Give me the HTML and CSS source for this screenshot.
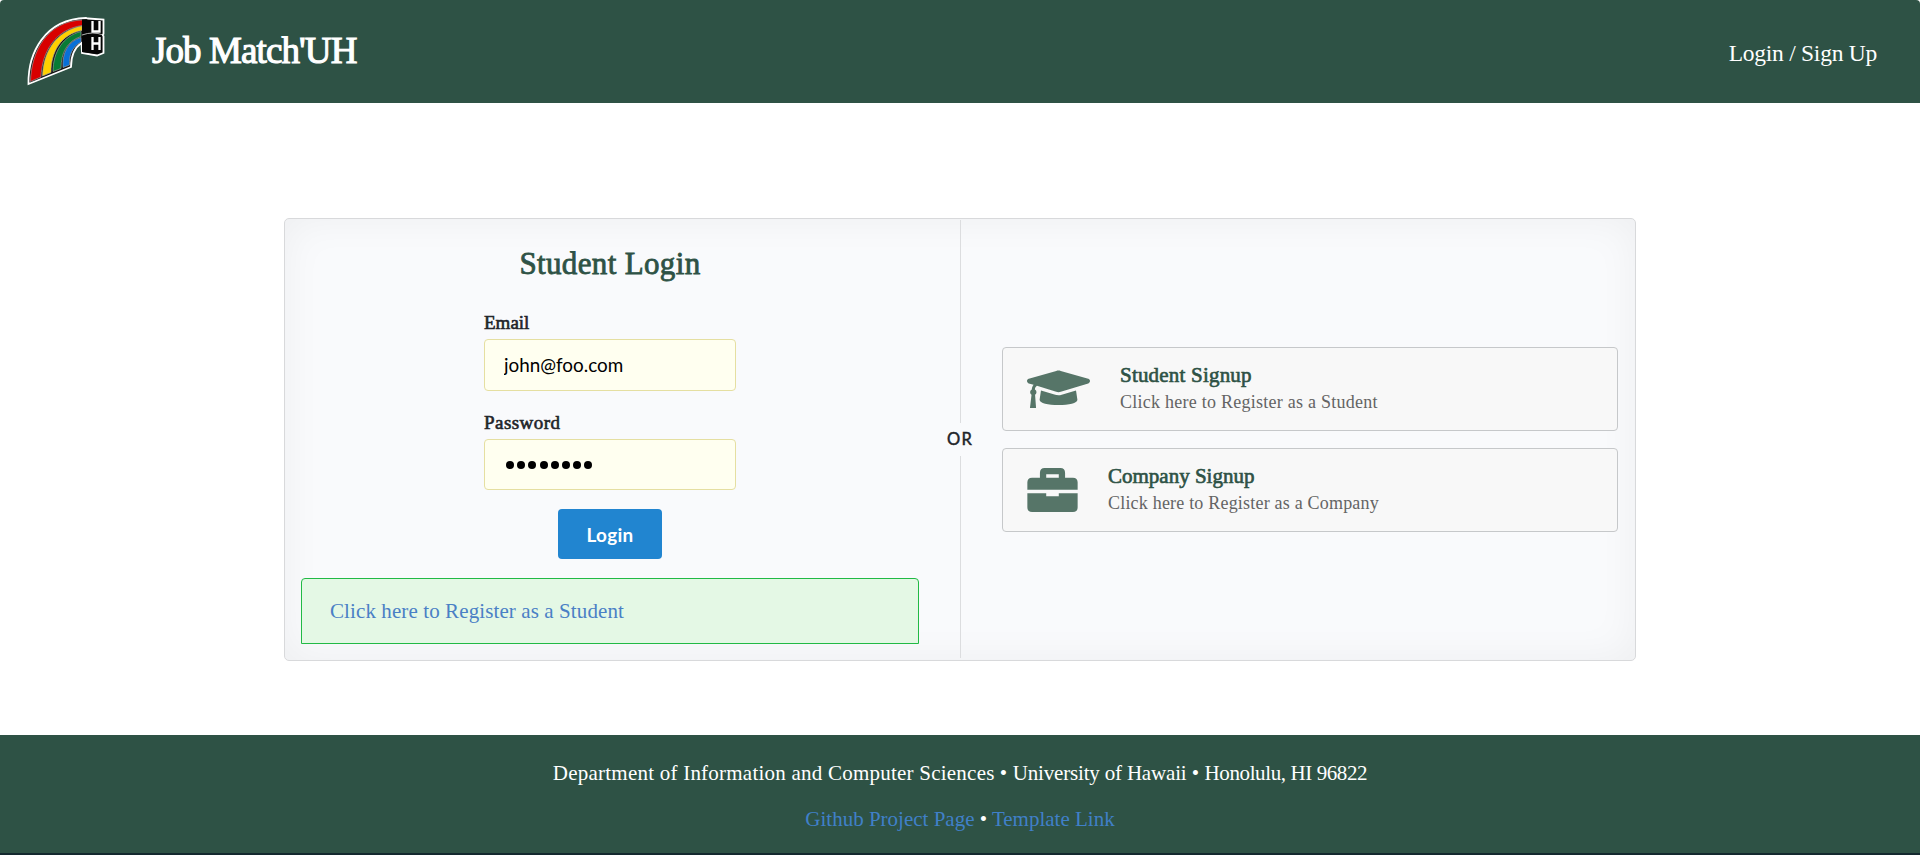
FILE: index.html
```html
<!DOCTYPE html>
<html lang="en">
<head>
<meta charset="utf-8">
<title>Job Match'UH</title>
<link rel="stylesheet" href="styles.css">
</head>
<body>
<header class="navbar">
  <a class="brand">
    <svg class="logo" viewBox="0 0 100 85">
      <path d="M8.500 75C8 45 24 10 66 9L68 9.500 83.500 10.500V25L82.500 26 83.500 27V44L77 46.500 62 44 61.500 34C54 39 51 47 51 58Z" fill="#111" stroke="#fff" stroke-width="1.800"/>
      <g stroke="#aaa" stroke-width=".6">
        <path d="M10.500 72.500C11 43 27 12 62.500 11V16.500C36 20 22 42 21 68Z" fill="#d80000"/>
        <path d="M22.500 67C23.500 42 36 22 62 17V21.500C41 25 31 43 31 63.500Z" fill="#ffd000"/>
        <path d="M33 62.500C33 43 43 27 61 22.500V27.500C47 32 41 44 41 59.500Z" fill="#087b35"/>
        <path d="M43 58.500C42 44 48 32 61 28.500V33C52 38 49 46 49.500 56Z" fill="#0870d8"/>
      </g>
      <path d="M62 10.500 82 12V43L77 45 62 43Z" fill="#050505"/>
      <path d="M62 26Q73 22 83 26" fill="none" stroke="#ddd" stroke-width=".8"/>
      <path d="M72.500 12V22.500H79.500V12M72.500 28V41M79.500 28V41M72.500 34.500H79.500" fill="none" stroke="#fff" stroke-width="2.300"/>
    </svg>
    <h1 class="brand-name">Job Match'UH</h1>
  </a>
  <a class="nav-login">Login / Sign Up</a>
</header>

<main class="page">
  <section class="panel">
    <div class="column login">
      <h2 class="login-title">Student Login</h2>
      <form class="form">
        <label class="label email" for="email">Email</label>
        <input class="input" id="email" type="text" value="john@foo.com">
        <label class="label password" for="password">Password</label>
        <div class="input dots" id="password"><i></i><i></i><i></i><i></i><i></i><i></i><i></i><i></i></div>
        <button class="button" type="button">Login</button>
      </form>
      <div class="message"><a class="message-link">Click here to Register as a Student</a></div>
    </div>
    <div class="divider"><span class="or">OR</span></div>
    <div class="column signup">
      <a class="card">
        <svg class="icon hat" viewBox="0 0 640 384"><path d="M622 89 343 8c-15-5-31-5-46 0L18 89c-24 7-24 38 0 46l49 15c-11 13-17 29-18 47-10 5-17 15-17 27 0 11 6 20 14 26L30 384h62L82 250c8-6 14-15 14-26 0-12-6-21-16-27 1-15 9-28 21-37l196 60c15 5 31 5 46 0l279-85c24-8 24-39 0-46ZM353 251c-29 9-53 4-66 0l-145-44-14 93c0 35 86 54 192 54s192-19 192-54l-14-93Z"/></svg>
        <div class="card-text"><h3 class="card-title student-title">Student Signup</h3><p class="card-note student-note">Click here to Register as a Student</p></div>
      </a>
      <a class="card">
        <svg class="icon case" viewBox="0 0 512 448"><path fill-rule="evenodd" d="M0 256h192v32h128v-32h192v144q0 48-48 48H48q-48 0-48-48ZM48 98h80V48q0-48 48-48h160q48 0 48 48v50h80q48 0 48 48v76H0v-76q0-48 48-48Zm144 0h128V64H192Z"/></svg>
        <div class="card-text"><h3 class="card-title company-title">Company Signup</h3><p class="card-note company-note">Click here to Register as a Company</p></div>
      </a>
    </div>
  </section>
</main>

<footer class="footer">
  <p class="address"><span class="department">Department of Information and Computer Sciences</span> <span class="bullet">•</span> <span class="university">University of Hawaii</span> <span class="bullet">•</span> <span class="city">Honolulu, HI 96822</span></p>
  <p class="links"><a class="footer-link">Github Project Page</a> • <a class="footer-link">Template Link</a></p>
</footer>
</body>
</html>
```
FILE: styles.css
```css
* { box-sizing: border-box; }
body {
  margin: 0;
  height: 855px;
  display: flex;
  flex-direction: column;
  overflow: hidden;
  background: #fff;
  font-family: "Liberation Serif", serif;
}
h1, h2, h3, p { margin: 0; white-space: nowrap; }
h1, h2, h3 { font-weight: 400; }
a { white-space: nowrap; }
.navbar {
  height: 103px;
  flex: none;
  display: flex;
  align-items: center;
  justify-content: space-between;
  padding: 0 43px 0 20px;
  border-radius: 4px 4px 0 0;
  background: #2e5245;
  color: #fff;
}
.brand { display: flex; align-items: center; gap: 32px; }
.logo { width: 100px; height: 85px; }
.brand-name {
  padding-bottom: 2px;
  font-size: 37px;
  line-height: 42px;
  letter-spacing: -0.9px;
  -webkit-text-stroke: 1.1px currentColor;
}
.nav-login { font-size: 23.500px; line-height: 28px; padding-top: 3px; letter-spacing: -0.25px; }
.page { flex: none; height: 632px; padding: 115px 284px 0; }
.panel {
  height: 443px;
  display: grid;
  grid-template-columns: 675px 1px 1fr;
  border: 1px solid #d8d9db;
  border-radius: 5px;
  background: #f9fafc;
  box-shadow: inset 0 0 40px rgba(0, 0, 0, .05);
}
.login { display: flex; flex-direction: column; padding: 27px 41px 0 16px; }
.login-title {
  align-self: center;
  font-size: 31px;
  line-height: 36px;
  letter-spacing: .35px;
  color: #2e5245;
  -webkit-text-stroke: .8px currentColor;
}
.form { width: 252px; margin: 0 auto; display: flex; flex-direction: column; }
.label {
  align-self: flex-start;
  margin-top: 30px;
  font-size: 19px;
  line-height: 22px;
  color: #212429;
  white-space: nowrap;
  -webkit-text-stroke: .6px currentColor;
}
.label.password { margin-top: 21px; letter-spacing: .45px; }
.input {
  width: 252px;
  height: 52px;
  margin-top: 5px;
  padding: 0 20px 2px 19px;
  border: 1px solid #e5dfa1;
  border-radius: 4px;
  background: #fffff0;
  color: #000;
  font-family: Lato, sans-serif;
  font-size: 18.860px;
}
.dots { height: 51px; display: flex; align-items: center; gap: 3.200px; padding: 1px 0 0 21px; }
.dots i { width: 8px; height: 8px; border-radius: 50%; background: #000; }
.button {
  align-self: center;
  width: 104px;
  height: 50px;
  margin-top: 19px;
  padding: 0;
  border: 0;
  border-radius: 4px;
  background: #2185d0;
  color: #fff;
  font: 700 18.860px Lato, sans-serif;
  letter-spacing: .3px;
}
.message {
  height: 66px;
  margin-top: 19px;
  padding: 0 28px;
  display: flex;
  align-items: center;
  border: 1px solid #21ba45;
  border-radius: 4px 4px 0 0;
  background: #e4f8e5;
  color: #4a80c5;
  font-size: 21px;
  letter-spacing: .1px;
}
.divider {
  display: flex;
  flex-direction: column;
  align-items: center;
  margin: 1px 0 2px;
}
.divider::before, .divider::after { content: ""; flex: 1; width: 1px; background: #dcdddf; }
.or {
  height: 33px;
  padding-right: 1px;
  line-height: 32px;
  color: #212429;
  font-family: Lato, sans-serif;
  font-size: 16.500px;
  letter-spacing: 1.300px;
  -webkit-text-stroke: .45px currentColor;
}
.signup { display: flex; flex-direction: column; justify-content: center; gap: 17px; padding: 0 17px 0 41px; }
.card {
  height: 84px;
  display: flex;
  align-items: center;
  gap: 30px;
  padding: 0 24px;
  border: 1px solid #c6c8ca;
  border-radius: 4px;
  background: #f8f8f8;
}
.icon { flex: none; fill: #567568; }
.hat { width: 63px; height: 38px; }
.case { width: 51px; height: 44px; }
.card-title { font-size: 21px; line-height: 25px; color: #2e5245; -webkit-text-stroke: .65px currentColor; }
.student-title { letter-spacing: .2px; }
.card-note { padding-top: 1px; font-size: 18px; line-height: 27px; color: #646464; }
.student-note { letter-spacing: .25px; }
.company-note { letter-spacing: .2px; }
.footer {
  flex: none;
  height: 120px;
  padding-top: 25px;
  display: flex;
  flex-direction: column;
  align-items: center;
  gap: 20px;
  border-bottom: 2px solid #14292f;
  background: #2e5245;
  color: #fff;
  font-size: 21px;
  line-height: 26px;
}
.department { letter-spacing: .23px; }
.university { letter-spacing: -.18px; }
.city { letter-spacing: -.4px; }
.bullet { letter-spacing: .3px; }
.footer-link { color: #4080c8; }
```
